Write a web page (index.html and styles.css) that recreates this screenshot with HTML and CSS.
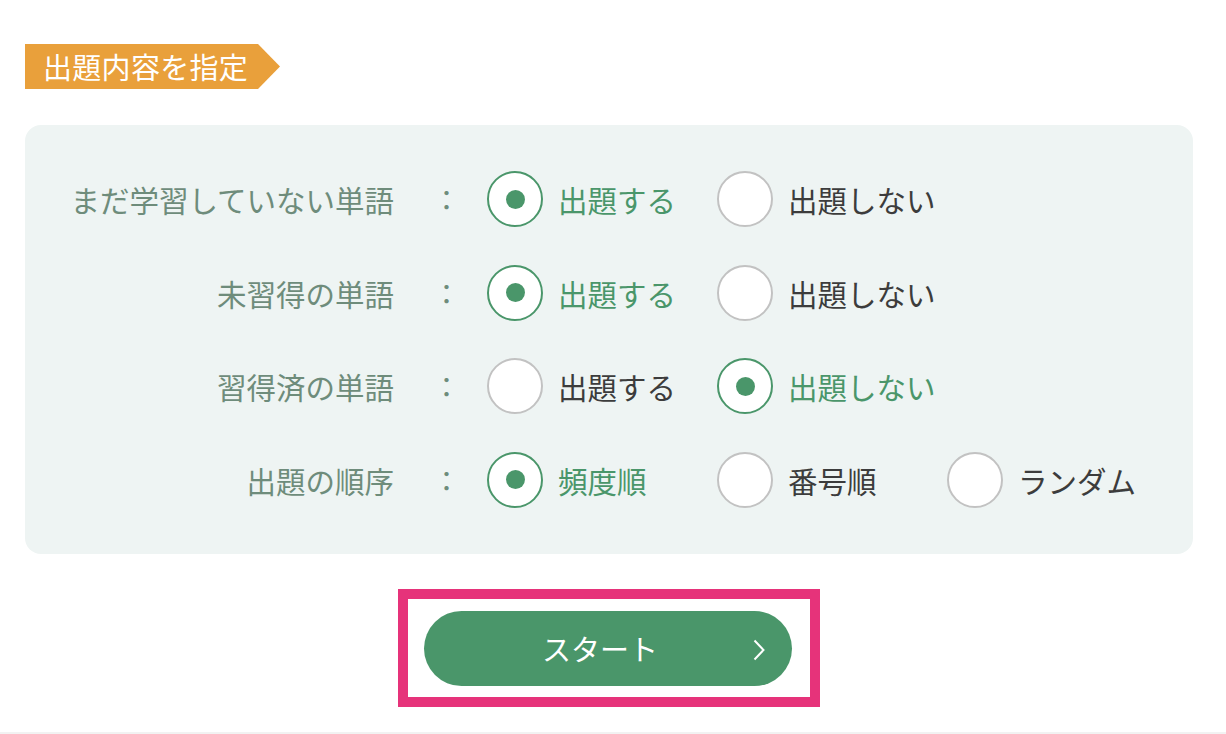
FILE: index.html
```html
<!DOCTYPE html>
<html lang="ja">

<head>
  <meta charset="UTF-8">
  <meta name="viewport" content="width=device-width, initial-scale=1.0">
  <title>出題内容を指定</title>
  <link rel="stylesheet" href="styles.css">
</head>

<body>

  <div class="page">
    <div class="tag">出題内容を指定</div>

    <div class="panel">
      <div class="row">
        <div class="label">まだ学習していない単語</div>
        <div class="colon">：</div>
        <label class="option checked"><span class="radio"></span>出題する</label>
        <label class="option"><span class="radio"></span>出題しない</label>
      </div>
      <div class="row">
        <div class="label">未習得の単語</div>
        <div class="colon">：</div>
        <label class="option checked"><span class="radio"></span>出題する</label>
        <label class="option"><span class="radio"></span>出題しない</label>
      </div>
      <div class="row">
        <div class="label">習得済の単語</div>
        <div class="colon">：</div>
        <label class="option"><span class="radio"></span>出題する</label>
        <label class="option checked"><span class="radio"></span>出題しない</label>
      </div>
      <div class="row">
        <div class="label">出題の順序</div>
        <div class="colon">：</div>
        <label class="option checked"><span class="radio"></span>頻度順</label>
        <label class="option"><span class="radio"></span>番号順</label>
        <label class="option"><span class="radio"></span>ランダム</label>
      </div>
    </div>

    <div class="start-wrap">
      <div class="highlight">
        <button class="start-btn">
          <span class="start-text">スタート</span>
          <svg class="chevron" width="12" height="22" viewBox="0 0 12 22">
            <path d="M1.5 1.5 L10.5 11 L1.5 20.5" fill="none" stroke="#fff" stroke-width="2" />
          </svg>
        </button>
      </div>
    </div>
  </div>

  <div class="bottom-line"></div>

</body>

</html>
```

FILE: styles.css
```css
body {
  font-family: "Noto Sans CJK JP", "Noto Sans", sans-serif;
  background-color: #fff;
  margin: 0;
  padding: 0;
  height: 734px;
  overflow: hidden;
}

.page {
  padding: 44px 0 0 25px;
  width: 1168px;
}

.tag {
  width: 255px;
  height: 45px;
  box-sizing: border-box;
  padding-left: 18px;
  background-color: #e9a03b;
  color: #fff;
  font-size: 29px;
  line-height: 45px;
  letter-spacing: 0.3px;
  clip-path: polygon(0 0, 233px 0, 255px 22.5px, 233px 45px, 0 45px);
}

.panel {
  margin-top: 36px;
  background-color: #eef4f3;
  border-radius: 16px;
  padding: 46px 0;
  display: flex;
  flex-direction: column;
  gap: 37.5px;
}

.row {
  display: grid;
  grid-template-columns: 369px 93px repeat(3, 230px);
  align-items: center;
  height: 56px;
}

.label {
  text-align: right;
  color: #6e8c7b;
  font-size: 29.5px;
  white-space: nowrap;
}

.colon {
  color: #6e8c7b;
  font-size: 28px;
  text-align: center;
  padding-left: 12px;
}

.option {
  display: flex;
  align-items: center;
  gap: 15px;
  font-size: 29.5px;
  color: #3c3c3c;
  white-space: nowrap;
  cursor: pointer;
}

.radio {
  width: 56px;
  height: 56px;
  box-sizing: border-box;
  border-radius: 50%;
  background-color: #fff;
  border: 2px solid #c2c2c2;
  display: flex;
  align-items: center;
  justify-content: center;
  flex-shrink: 0;
}

.option.checked {
  color: #4a966a;
}

.option.checked .radio {
  border-color: #4a966a;
}

.option.checked .radio::after {
  content: "";
  width: 19px;
  height: 19px;
  border-radius: 50%;
  background-color: #4a966a;
}

.start-wrap {
  display: flex;
  justify-content: center;
  margin-top: 35px;
}

.highlight {
  border: 10px solid #e6337a;
  padding: 12px 18px 11px 16px;
}

.start-btn {
  position: relative;
  width: 368px;
  height: 75px;
  border: none;
  border-radius: 38px;
  background-color: #4a966a;
  color: #fff;
  font-family: inherit;
  font-size: 29px;
  padding: 0 16px 0 0;
  cursor: pointer;
  display: block;
}

.chevron {
  position: absolute;
  right: 27px;
  top: 28px;
}

.bottom-line {
  position: absolute;
  left: 0;
  right: 0;
  top: 732px;
  height: 2px;
  background-color: #f2f2f2;
}
```
